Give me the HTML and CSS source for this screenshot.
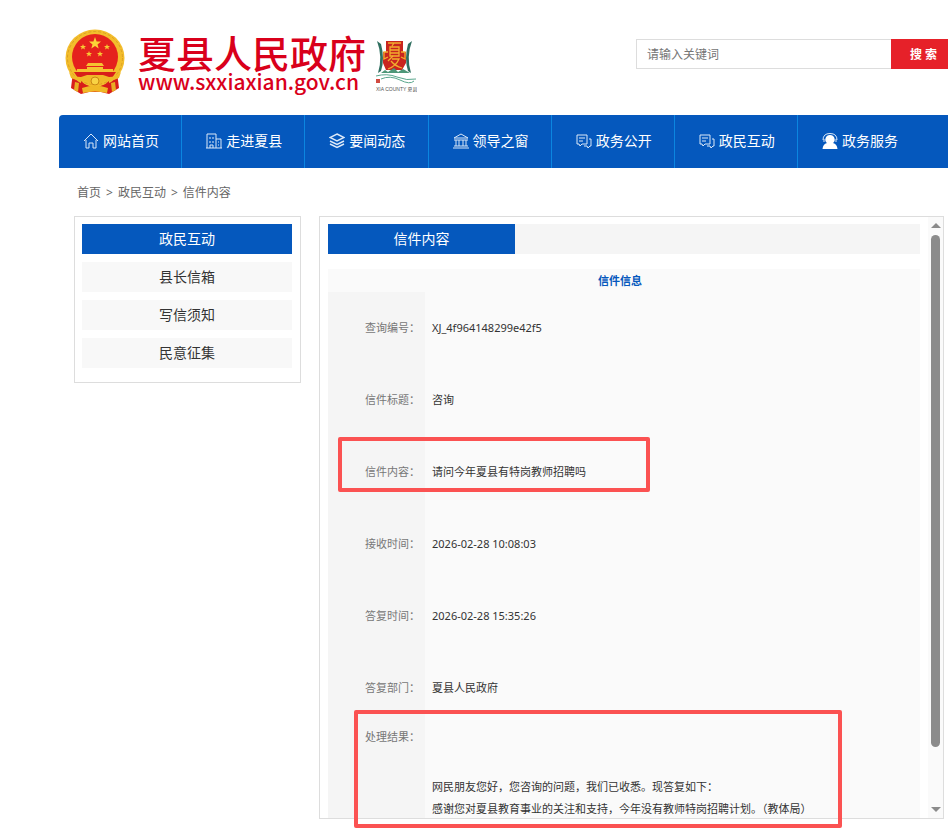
FILE: index.html
```html
<!DOCTYPE html>
<html lang="zh-CN">
<head>
  <meta charset="UTF-8">
  <meta name="viewport" content="width=device-width, initial-scale=1.0">
  <title>夏县人民政府</title>
  <link rel="stylesheet" href="styles.css">
</head>
<body>
  <div class="page">
    <header class="header">
      <a class="logo" href="#">
        <svg class="emblem" viewBox="0 0 60 67" aria-hidden="true">
          <path d="M8 44 L52 44 L54 60 L44 66 L36 64 L24 64 L16 66 L6 60 Z" fill="#d81e1a"/>
          <ellipse cx="30" cy="30" rx="29.500" ry="28.500" fill="#f3bd2c"/>
          <ellipse cx="30" cy="30" rx="27.500" ry="26.500" fill="none" stroke="#dba024" stroke-width="1" stroke-dasharray="3 2"/>
          <circle cx="30" cy="29" r="23" fill="#e5211d"/>
          <path d="M30 9 L31.600 13.500 L36 13.600 L32.500 16.400 L33.700 20.600 L30 18.100 L26.300 20.600 L27.500 16.400 L24 13.600 L28.400 13.500 Z" fill="#fbd437"/>
          <g fill="#f7c934">
            <path id="star" d="M18 16 L18.800 18 L21 18 L19.300 19.400 L20 21.500 L18 20.200 L16 21.500 L16.700 19.400 L15 18 L17.200 18 Z"/>
            <use href="#star" x="24"/>
            <use href="#star" x="6" y="7"/>
            <use href="#star" x="17" y="7"/>
          </g>
          <path d="M23 35 H37 L39 38 H21 Z M22 39 H38 V41 H48 V45 H12 V41 H22 Z" fill="#f5c231"/>
          <path d="M9 44 L51 44 L47 50 H13 Z" fill="#d81e1a"/>
          <path d="M4 44 Q9 49 16 49 L22 47 H38 L44 49 Q51 49 56 44 L54 50 Q46 54 39 53 Q35 57 30 57 Q25 57 21 53 Q14 54 6 50 Z" fill="#f0b927"/>
          <path d="M16 53 Q22 59 30 59 T44 53 L44 57 Q37 62 30 62 T16 57 Z" fill="#d81e1a"/>
          <circle cx="30" cy="53" r="4" fill="#f8d344" stroke="#c98614"/>
          <path d="M17 60 Q30 55 43 60 L42 65 Q30 62 18 65 Z" fill="#f0b927"/>
          <path d="M10 54 L14 55 L13 64 L9 62 Z M50 54 L46 55 L47 64 L51 62 Z" fill="#e9ad23"/>
        </svg>
        <span class="site-name">
          <strong class="site-title">夏县人民政府</strong>
          <span class="site-url">www.sxxiaxian.gov.cn</span>
        </span>
        <svg class="county-logo" viewBox="0 0 42 54" aria-label="XIA COUNTY 夏县">
          <path d="M11 2 H28 V13 H31 V24 L27 31 H11 L8 24 V13 H11 Z" fill="#c9251f"/>
          <g fill="none" stroke="#f2ae2e" stroke-width="1.300">
            <path d="M13 4 H26 M19 4 L17 7 M15 8 H24 V17 H15 Z M15 11 H24 M15 14 H24"/>
            <path d="M18 17 L13 22 M17 20 H24 Q21 27 13 30 M16 22 Q20 27 27 29"/>
            <path d="M13 13 H9 V20 L13 18 M26 13 H30 V20 L26 18"/>
          </g>
          <path d="M2 2 L6 5 Q10 20 6 32 L3 34 Q8 18 2 2 Z M37 2 L33 5 Q29 20 33 32 L36 34 Q31 18 37 2 Z" fill="#2f6f60"/>
          <path d="M6 34 L10 31 L13 33 L19 29 L23 33 L28 30 L35 34 Z" fill="#4d9778"/>
          <path d="M1 37 Q12 34 22 38 T41 40 M6 40 Q15 36 25 41 T39 42" fill="none" stroke="#5aa78d"/>
          <path d="M1 40 H5 V44 H1 Z" fill="#d14a40"/>
          <text class="county-text" x="1" y="52">XIA COUNTY 夏县</text>
        </svg>
      </a>
      <form class="search" onsubmit="return false">
        <input class="search-input" type="text" placeholder="请输入关键词" aria-label="请输入关键词">
        <button class="search-btn" type="submit">搜 索</button>
      </form>
    </header>

    <nav class="nav">
      <a href="#">
        <svg viewBox="0 0 16 16"><path d="M1 8 L8 1 L15 8 M3 7 V15 H6 V10 H10 V15 H13 V7"/></svg>
        网站首页
      </a>
      <a href="#">
        <svg viewBox="0 0 16 16"><path d="M1 15 V1 H10 V15 M0 15 H16 M10 6 H15 V15 M4 4 V6 M7 4 V6 M4 8 V10 M7 8 V10 M4 15 V12 H7 V15 M12 9 H13 M12 12 H13"/></svg>
        走进夏县
      </a>
      <a href="#">
        <svg class="bold" viewBox="0 0 16 16"><path d="M8 1 L15 4.500 L8 8 L1 4.500 Z M1 8 L8 11.500 L15 8 M1 11 L8 14.500 L15 11"/></svg>
        要闻动态
      </a>
      <a href="#">
        <svg viewBox="0 0 16 16"><path d="M1 5 L8 1 L15 5 Z M1 7 H15 M3 7 V13 M6 7 V13 M10 7 V13 M13 7 V13 M1 13 H15 M0 15 H16"/></svg>
        领导之窗
      </a>
      <a href="#">
        <svg viewBox="0 0 16 16"><path d="M1 2 H11 V11 H6 L4 13 L3 11 H1 Z M3 5 H9 M3 8 H7 M13 6 H15 V13 H14 L12 15 L11 13 H8"/></svg>
        政务公开
      </a>
      <a href="#">
        <svg viewBox="0 0 16 16"><path d="M1 2 H11 V11 H6 L4 13 L3 11 H1 Z M3 5 H9 M3 8 H7 M13 6 H15 V13 H14 L12 15 L11 13 H8"/></svg>
        政民互动
      </a>
      <a href="#">
        <svg viewBox="0 0 16 16"><path class="solid" d="M8 2 A4.500 4.500 0 0 1 11 10 Q15 11 15.500 16 H0.500 Q1 11 5 10 A4.500 4.500 0 0 1 8 2 Z"/><path d="M1 7 Q1 0.500 8 0.500 T15 7 M14 6 V9 M2 6 V9"/></svg>
        政务服务
      </a>
    </nav>

    <div class="breadcrumb">
      <a href="#">首页</a>
      <span>&gt;</span>
      <a href="#">政民互动</a>
      <span>&gt;</span>
      <a href="#">信件内容</a>
    </div>

    <div class="main">
      <aside class="sidebar">
        <h2>政民互动</h2>
        <a href="#">县长信箱</a>
        <a href="#">写信须知</a>
        <a href="#">民意征集</a>
      </aside>

      <div class="content">
        <div class="panel">
          <div class="panel-body">
            <div class="tabs">
              <h2>信件内容</h2>
            </div>
            <table class="letter">
              <thead>
                <tr><th colspan="2">信件信息</th></tr>
              </thead>
              <tbody>
                <tr><th scope="row">查询编号：</th><td>XJ_4f964148299e42f5</td></tr>
                <tr><th scope="row">信件标题：</th><td>咨询</td></tr>
                <tr><th scope="row">信件内容：</th><td>请问今年夏县有特岗教师招聘吗</td></tr>
                <tr><th scope="row">接收时间：</th><td>2026-02-28 10:08:03</td></tr>
                <tr><th scope="row">答复时间：</th><td>2026-02-28 15:35:26</td></tr>
                <tr><th scope="row">答复部门：</th><td>夏县人民政府</td></tr>
                <tr class="result">
                  <th scope="row">处理结果：</th>
                  <td>网民朋友您好，您咨询的问题，我们已收悉。现答复如下：<br>感谢您对夏县教育事业的关注和支持，今年没有教师特岗招聘计划。（教体局）</td>
                </tr>
              </tbody>
            </table>
          </div>
          <div class="scrollbar" aria-hidden="true">
            <span class="arrow arrow-up"></span>
            <span class="thumb"></span>
            <span class="arrow arrow-down"></span>
          </div>
        </div>
        <!-- 标注框 -->
        <div class="mark mark-question"></div>
        <div class="mark mark-answer"></div>
      </div>
    </div>
  </div>
</body>
</html>
```

FILE: styles.css
```css
* {
  box-sizing: border-box;
}

body {
  margin: 0;
  font-family: "Noto Sans", "Noto Sans CJK SC", sans-serif;
  font-size: 14px;
  color: #333;
  background-color: #fff;
}

a {
  color: inherit;
  text-decoration: none;
}

h2 {
  margin: 0;
  font-size: 14px;
  font-weight: normal;
  line-height: 30px;
  text-align: center;
  color: #fff;
  background-color: #0558bd;
}

.page {
  min-height: 100vh;
  padding-left: 59px;
}

/* 页头 */
.header {
  display: flex;
  justify-content: space-between;
  height: 115px;
}

.logo {
  display: flex;
  align-items: flex-start;
  padding: 28px 0 0 6px;
}

.emblem {
  width: 60px;
  height: 67px;
  margin-right: 13px;
}

.site-name {
  display: flex;
  flex-direction: column;
  padding-top: 5px;
  color: #d9001b;
  font-family: "Noto Sans CJK SC", sans-serif;
  white-space: nowrap;
}

.site-title {
  font-size: 38px;
  font-weight: 500;
  line-height: 38px;
}

.site-url {
  font-size: 21px;
  font-weight: 500;
  line-height: 21px;
}

.county-logo {
  width: 42px;
  height: 54px;
  margin: 11px 0 0 9px;
}

.county-text {
  font-family: "Liberation Sans", "Noto Sans CJK SC", sans-serif;
  font-size: 5px;
  fill: #555;
}

.search {
  display: flex;
  height: 30px;
  margin-top: 39px;
}

.search-input {
  width: 255px;
  padding: 0 10px;
  border: 1px solid #ddd;
  border-right: 0;
  font-family: inherit;
  font-size: 12px;
  outline: none;
}

.search-input::placeholder {
  color: #757575;
}

.search-btn {
  width: 57px;
  padding: 0 0 0 8px;
  border: 0;
  font-family: inherit;
  font-size: 12px;
  font-weight: bold;
  color: #fff;
  background-color: #e62129;
}

/* 导航 */
.nav {
  display: grid;
  grid-template-columns: repeat(6, 124fr) 151fr;
  height: 53px;
  border-radius: 4px 0 0 0;
  overflow: hidden;
  background-color: #0558bd;
}

.nav a {
  display: flex;
  align-items: center;
  gap: 4px;
  padding: 0 0 3px 24px;
  border-right: 1px solid #0b86e0;
  color: #fff;
  white-space: nowrap;
}

.nav a:last-child {
  border-right: 0;
}

.nav svg {
  width: 16px;
  height: 16px;
  margin-top: 2px;
  fill: none;
  stroke: #dbe8f8;
}

.nav .bold {
  stroke-width: 1.4;
}

.nav .solid {
  fill: #fff;
  stroke: none;
}

.breadcrumb {
  display: flex;
  gap: 5px;
  padding: 13px 18px 12px;
  font-size: 12px;
  line-height: 23px;
  color: #666;
}

/* 主体 */
.main {
  display: flex;
  align-items: flex-start;
  gap: 18px;
  padding: 0 4px 13px 15px;
}

.sidebar {
  display: flex;
  flex: 0 0 227px;
  flex-direction: column;
  gap: 8px;
  padding: 7px 8px 14px 7px;
  border: 1px solid #ddd;
}

.sidebar a {
  line-height: 30px;
  text-align: center;
  background-color: #f8f8f8;
}

.content {
  position: relative;
  flex: 1;
  min-width: 0;
}

.panel {
  display: flex;
  height: calc(100vh - 229px);
  border: 1px solid #ddd;
  overflow: hidden;
}

.panel-body {
  flex: 1;
  padding: 7px 8px 0;
}

.tabs {
  margin-bottom: 15px;
  background-color: #f5f5f5;
}

.tabs h2 {
  width: 187px;
}

.letter {
  width: 100%;
  border-collapse: collapse;
  font-size: 11px;
  line-height: 22px;
  background-color: #fafafa;
}

.letter th,
.letter td {
  padding: 0;
  text-align: left;
}

.letter thead th {
  height: 23px;
  padding-right: 8px;
  text-align: center;
  color: #0558bd;
}

.letter tbody th {
  width: 97px;
  padding-left: 37px;
  font-weight: normal;
  color: #777;
  background-color: #f5f5f5;
}

.letter td {
  height: 72px;
  padding-left: 7px;
}

.letter .result th,
.letter .result td {
  padding-top: 2px;
  vertical-align: top;
}

.letter .result td {
  padding-top: 52px;
}

/* 滚动条 */
.scrollbar {
  display: flex;
  flex: 0 0 15px;
  flex-direction: column;
  align-items: center;
  padding: 6px 0;
  background-color: #fafafa;
}

.arrow {
  border: 5px solid transparent;
}

.arrow-up {
  border-top: 0;
  border-bottom-color: #8b8b8b;
}

.arrow-down {
  margin-top: auto;
  border-bottom: 0;
  border-top-color: #8b8b8b;
}

.thumb {
  width: 9px;
  height: 87%;
  margin-top: 7px;
  border-radius: 5px;
  background-color: #8b8b8b;
}

/* 红色标注框 */
.mark {
  position: absolute;
  border: 4px solid #fb5252;
  border-radius: 2px;
  pointer-events: none;
}

.mark-question {
  left: 19px;
  top: 221px;
  width: 312px;
  height: 55px;
}

.mark-answer {
  left: 35px;
  top: 494px;
  width: 488px;
  height: 118px;
}
```
